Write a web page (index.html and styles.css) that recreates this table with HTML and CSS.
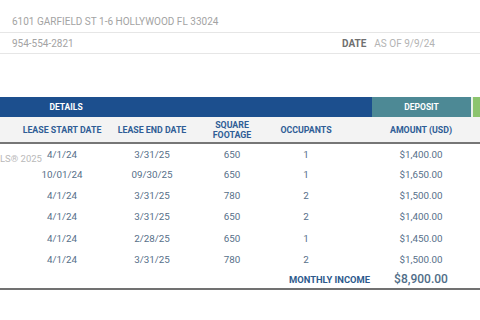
FILE: index.html
```html
<!DOCTYPE html>
<html>
<head>
<meta charset="utf-8">
<link rel="stylesheet" href="styles.css">
</head>
<body>
<div class="page">
  <div class="info">
    <div class="info-row addr">6101 GARFIELD ST 1-6 HOLLYWOOD FL 33024</div>
    <div class="info-row phone">
      <span class="phone-num">954-554-2821</span>
      <span class="date"><b>DATE</b><span class="date-val">AS OF 9/9/24</span></span>
    </div>
  </div>

  <div class="table">
    <div class="band">
      <div class="band-details">DETAILS</div>
      <div class="band-fill"></div>
      <div class="band-deposit">DEPOSIT</div>
      <div class="band-green"></div>
    </div>
    <div class="grid head">
      <div>LEASE START DATE</div>
      <div>LEASE END DATE</div>
      <div>SQUARE<br>FOOTAGE</div>
      <div>OCCUPANTS</div>
      <div></div>
      <div>AMOUNT (USD)</div>
    </div>
    <div class="body">
      <div class="grid row"><div>4/1/24</div><div>3/31/25</div><div>650</div><div>1</div><div></div><div>$1,400.00</div></div>
      <div class="grid row"><div>10/01/24</div><div>09/30/25</div><div>650</div><div>1</div><div></div><div>$1,650.00</div></div>
      <div class="grid row"><div>4/1/24</div><div>3/31/25</div><div>780</div><div>2</div><div></div><div>$1,500.00</div></div>
      <div class="grid row"><div>4/1/24</div><div>3/31/25</div><div>650</div><div>2</div><div></div><div>$1,400.00</div></div>
      <div class="grid row"><div>4/1/24</div><div>2/28/25</div><div>650</div><div>1</div><div></div><div>$1,450.00</div></div>
      <div class="grid row"><div>4/1/24</div><div>3/31/25</div><div>780</div><div>2</div><div></div><div>$1,500.00</div></div>
      <div class="grid total">
        <div class="total-label">MONTHLY INCOME</div>
        <div class="total-val">$8,900.00</div>
      </div>
      <div class="watermark">LS® 2025</div>
    </div>
  </div>
</div>
</body>
</html>
```

FILE: styles.css
```css
* { box-sizing: border-box; }
html, body { margin: 0; padding: 0; background: #fff; }
body {
  font-family: Roboto, "Liberation Sans", sans-serif;
  width: 480px;
  height: 320px;
  overflow: hidden;
}
.info-row {
  border-bottom: 1px solid #e6e6e6;
  padding-left: 12px;
  font-size: 10px;
  color: #a3a3a3;
}
.addr {
  height: 33px;
  padding-top: 16px;
  line-height: 12px;
}
.phone {
  height: 21px;
  display: flex;
  align-items: center;
  padding-top: 1px;
}
.phone-num { flex: 1; }
.date {
  width: 138px;
  display: flex;
  gap: 8px;
}
.date b { color: #6f6f6f; font-weight: 700; }
.date-val { color: #b3b3b3; }

.table { margin-top: 43px; }
.band {
  display: flex;
  height: 20px;
  color: #fff;
  font-size: 8.5px;
  font-weight: 700;
  line-height: 20px;
}
.band-details {
  width: 132px;
  background: #1c4f8e;
  text-align: center;
}
.band-fill { width: 240px; background: #1c4f8e; }
.band-deposit {
  width: 99px;
  background: #4d8995;
  text-align: center;
}
.band-green { flex: 1; background: linear-gradient(90deg, #e9f0ea 0 2px, #8cc46e 2px); }

.grid {
  display: grid;
  grid-template-columns: 96px 84px 76px 72px 30px 98px;
  padding-left: 14px;
  text-align: center;
}
.head {
  height: 27px;
  background: #f3f3f3;
  border-bottom: 2px solid #767676;
  color: #2f5d96;
  font-size: 8.8px;
  font-weight: 700;
  align-items: center;
  line-height: 10px;
}
.body { position: relative; }
.row {
  height: 21.2px;
  align-items: center;
  color: #566f89;
  font-size: 9.8px;
}
.body .row:first-of-type { height: 20px; }
.total {
  height: 20px;
  align-items: center;
  border-bottom: 2px solid #717171;
  grid-template-columns: 356px 2px 98px;
}
.total-label {
  grid-column: 1;
  text-align: right;
  color: #2d5a8d;
  font-size: 9.4px;
  font-weight: 700;
  padding-top: 2px;
}
.total-val {
  grid-column: 3;
  color: #4f6d88;
  font-size: 12px;
  font-weight: 500;
}
.watermark {
  position: absolute;
  left: 0;
  top: 9px;
  font-size: 9.5px;
  color: #b9b9b9;
}
```
